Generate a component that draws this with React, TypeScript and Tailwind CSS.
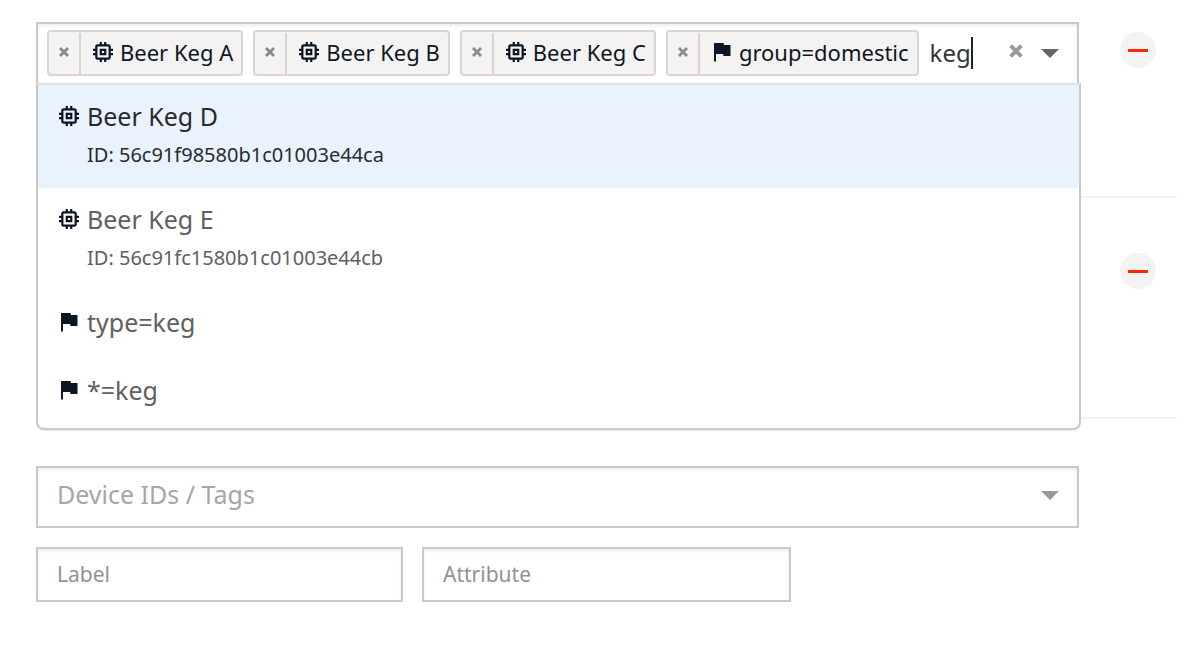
import { useState } from "react";
import type { ReactNode } from "react";

type Kind = "device" | "tag";

const selected: { kind: Kind; name: string }[] = [
  { kind: "device", name: "Beer Keg A" },
  { kind: "device", name: "Beer Keg B" },
  { kind: "device", name: "Beer Keg C" },
  { kind: "tag", name: "group=domestic" },
];

const options: { kind: Kind; name: string; id?: string }[] = [
  { kind: "device", name: "Beer Keg D", id: "56c91f98580b1c01003e44ca" },
  { kind: "device", name: "Beer Keg E", id: "56c91fc1580b1c01003e44cb" },
  { kind: "tag", name: "type=keg" },
  { kind: "tag", name: "*=keg" },
];

function KindIcon({ kind }: { kind: Kind }) {
  return kind === "device" ? (
    <svg viewBox="3 3 18 18" className="size-5 shrink-0 fill-[#0d1626]" aria-hidden="true">
      <path d="M15 9H9v6h6V9zm-2 4h-2v-2h2v2zm8-2V9h-2V7c0-1.1-.9-2-2-2h-2V3h-2v2h-2V3H9v2H7c-1.1 0-2 .9-2 2v2H3v2h2v2H3v2h2v2c0 1.1.9 2 2 2h2v2h2v-2h2v2h2v-2h2c1.1 0 2-.9 2-2v-2h2v-2h-2v-2h2zm-4 6H7V7h10v10z" />
    </svg>
  ) : (
    <svg viewBox="0 0 20 20" className="size-5 shrink-0 fill-[#0d1626]" aria-hidden="true">
      <path d="M2 1H11.5L12 3H18.5V14H11.5L11 12H4V19.5H2Z" />
    </svg>
  );
}

function Cross({ className }: { className: string }) {
  return (
    <svg viewBox="0 0 12 12" className={className} aria-hidden="true">
      <path d="M2 2L10 10M10 2L2 10" fill="none" stroke="currentColor" />
    </svg>
  );
}

function Arrow({ className }: { className: string }) {
  return (
    <svg viewBox="0 0 18 9" className={className} aria-hidden="true">
      <path d="M0 0H18L9 9Z" />
    </svg>
  );
}

function RemoveRow() {
  return (
    <button
      type="button"
      aria-label="Remove row"
      className="flex size-9 shrink-0 items-center justify-center rounded-full bg-[#f4f3f2]"
    >
      <span className="h-[3px] w-5 bg-[#ff2600]" />
    </button>
  );
}

function Row({ children, className }: { children: ReactNode; className: string }) {
  return (
    <div className={`flex justify-between border-b-2 border-[#f3f3f3] pr-[21px] ${className}`}>
      {children}
    </div>
  );
}

function DevicePicker() {
  const [query, setQuery] = useState("keg");
  return (
    <div className="relative mr-[41px] flex-1">
      <div className="flex items-center border-2 border-b-0 border-[#c9c9c9] pt-[6px] pr-[18px] pb-2 pl-[9px] shadow-[inset_0_2px_3px_rgba(0,0,0,0.07)]">
        <ul className="flex gap-[10px]">
          {selected.map((item) => (
            <li
              key={item.name}
              className="flex h-[46px] items-stretch rounded-[4px] border-2 border-[#d9d6d2] bg-[#f4f3f2] text-[22px] text-[#0d1626]"
            >
              <button
                type="button"
                aria-label={`Remove ${item.name}`}
                className="mt-px flex w-8 items-center justify-center border-r-2 border-[#d9d6d2] pb-1 text-[#8a8a8a]"
              >
                <Cross className="size-3 stroke-[2.8]" />
              </button>
              <span className="flex items-center gap-[7px] pr-2 pb-[2px] pl-3 leading-7 whitespace-nowrap">
                <KindIcon kind={item.kind} />
                {item.name}
              </span>
            </li>
          ))}
        </ul>
        <input
          role="combobox"
          aria-label="Device IDs / Tags"
          aria-expanded="true"
          aria-controls="device-options"
          value={query}
          onChange={(e) => setQuery(e.target.value)}
          className="ml-[11px] h-8 border-r-2 border-[#222] text-2xl text-[#333] caret-transparent outline-none [field-sizing:content]"
        />
        <button type="button" aria-label="Clear all" className="ml-auto pb-1 text-[#999]">
          <Cross className="size-4 stroke-[2.8]" />
        </button>
        <button type="button" aria-label="Close list" className="ml-[17px]">
          <Arrow className="h-[9px] w-[18px] fill-[#666]" />
        </button>
      </div>
      <ul
        id="device-options"
        role="listbox"
        aria-label="Devices and tags"
        className="absolute top-[61px] -right-[2px] left-0 z-10 rounded-b-lg border-2 border-t-[#e2e2e2] border-r-[#c9c9c9] border-b-[#c9c9c9] border-l-[#c9c9c9] bg-white pb-px shadow-[0_1px_1px_rgba(0,0,0,0.08)]"
      >
        {options.map((option, index) => (
          <li
            key={option.name}
            role="option"
            aria-selected={index === 0}
            className={`px-[21px] pt-[15px] ${option.id ? "pb-[17px]" : "pb-[21px]"} ${
              index === 0 ? "bg-[#e9f3fe] text-[#2b2b2b]" : "text-[#606060]"
            }`}
          >
            <div className="flex items-center gap-2 text-[25px] leading-8">
              <KindIcon kind={option.kind} />
              {option.name}
            </div>
            {option.id && <div className="mt-[7px] pl-7 text-xl leading-8">ID: {option.id}</div>}
          </li>
        ))}
      </ul>
    </div>
  );
}

export default function App() {
  return (
    <main className="min-h-screen bg-white pr-[23px] pl-9 font-['Noto_Sans',sans-serif]">
      <Row className="h-[198px] items-start pt-[22px]">
        <DevicePicker />
        <div className="pt-[10px]">
          <RemoveRow />
        </div>
      </Row>
      <Row className="h-[221px] items-start pt-[55px]">
        <div className="ml-auto">
          <RemoveRow />
        </div>
      </Row>
      <form className="mr-[98px] flex flex-col gap-[19px] pt-[47px] pb-12">
        <div className="relative">
          <select
            aria-label="Device IDs / Tags"
            defaultValue=""
            className="h-[62px] w-full appearance-none border-2 border-[#c9c9c9] px-[19px] pb-1 text-[25px] text-[#a6a6a6] shadow-[inset_0_2px_3px_rgba(0,0,0,0.07)]"
          >
            <option value="">Device IDs / Tags</option>
          </select>
          <Arrow className="pointer-events-none absolute top-[25px] right-5 h-[9px] w-[18px] fill-[#999]" />
        </div>
        <div className="flex gap-[19px]">
          <input
            aria-label="Label"
            placeholder="Label"
            className="h-[55px] w-[367px] border-2 border-[#c9c9c9] px-[19px] pb-[2px] text-[21px] shadow-[inset_0_2px_3px_rgba(0,0,0,0.07)] placeholder:text-[#929292]"
          />
          <input
            aria-label="Attribute"
            placeholder="Attribute"
            className="h-[55px] w-[369px] border-2 border-[#c9c9c9] px-[19px] pb-[2px] text-[21px] shadow-[inset_0_2px_3px_rgba(0,0,0,0.07)] placeholder:text-[#929292]"
          />
        </div>
      </form>
    </main>
  );
}
